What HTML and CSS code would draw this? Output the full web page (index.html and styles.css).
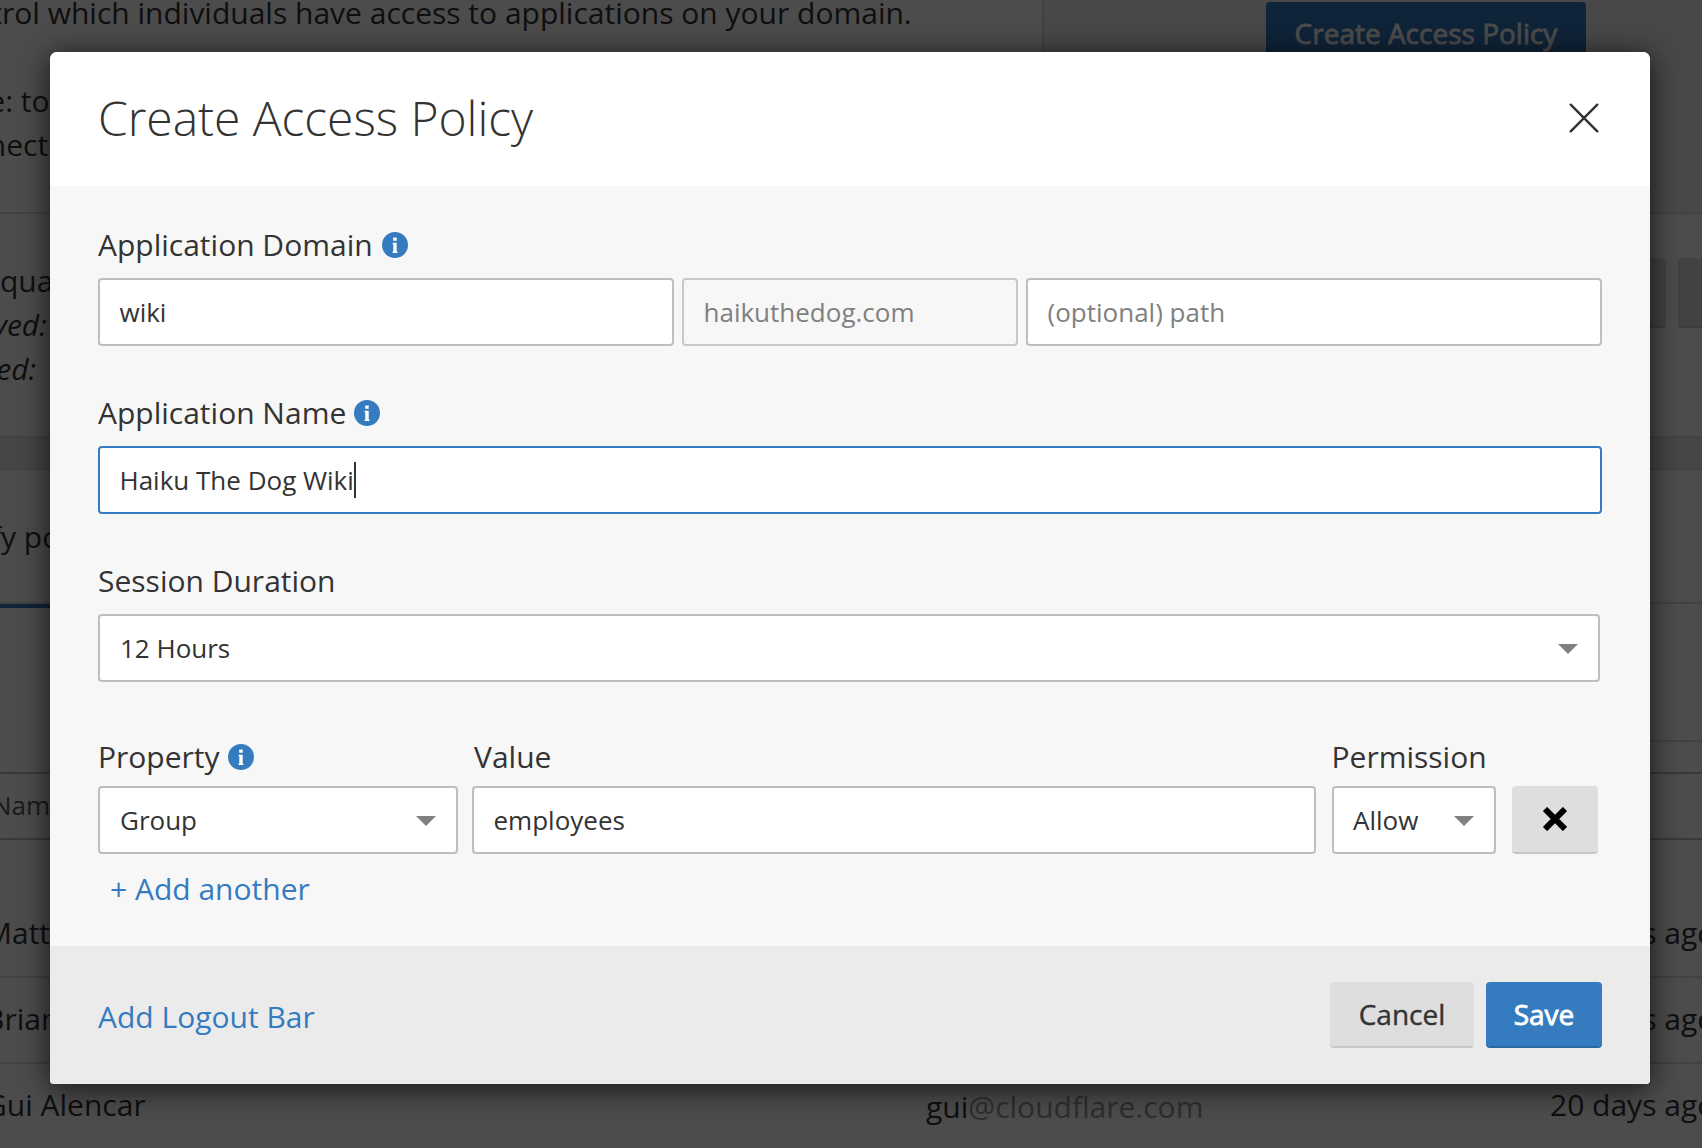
FILE: index.html
```html
<!DOCTYPE html>
<html lang="en">
<head>
<meta charset="utf-8">
<title>Create Access Policy</title>
<link rel="stylesheet" href="styles.css">
</head>
<body>
<div class="page">
  <section class="intro">
    <div class="intro-text">
      <p class="clip clip-intro">Control which individuals have access to applications on your domain.</p>
      <p class="clip clip-note">Note: to</p>
      <p class="clip clip-connect">connecti</p>
    </div>
    <div class="intro-action"><span class="btn btn-primary btn-create">Create Access Policy</span></div>
  </section>
  <section class="status">
    <div class="status-text">
      <p class="clip clip-qual">qua</p>
      <p class="clip clip-saved"><em>Saved:</em></p>
      <p class="clip clip-used"><em>Used:</em></p>
    </div>
    <div class="status-actions"><span class="ghost"></span><span class="ghost"></span></div>
  </section>
  <div class="band"></div>
  <section class="tabs"><p class="clip clip-modify">Modify po</p></section>
  <div class="tab-marker"></div>
  <div class="filters"></div>
  <div class="thead"><span class="clip clip-name">Name</span></div>
  <div class="row row-first"><span class="clip clip-person">Matt</span><span class="age">20 days ago</span></div>
  <div class="row"><span class="clip clip-person">Brian</span><span class="age">20 days ago</span></div>
  <div class="row"><span class="clip clip-person">Gui Alencar</span><span class="email">gui<span class="host">@cloudflare.com</span></span><span class="age">20 days ago</span></div>
</div>
<div class="overlay">
  <div class="modal">
    <header class="modal-header">
      <h1>Create Access Policy</h1>
      <svg class="close" width="30" height="30" viewBox="0 0 30 30"><path d="M1.7 1.7 28.3 28.3M28.3 1.7 1.7 28.3"/></svg>
    </header>
    <div class="modal-body">
      <div class="field">
        <div class="label">Application Domain <svg class="info" viewBox="0 0 26 26"><circle cx="13" cy="13" r="13"/><path d="M11.2 5.4h3.5v3.3h-3.5zM10.6 10.8h4.1v8.8h.7v1.4h-4.8v-1.4h.7v-7.4h-.7z"/></svg></div>
        <div class="domain-row">
          <div class="control">wiki</div>
          <div class="control disabled">haikuthedog.com</div>
          <div class="control placeholder">(optional) path</div>
        </div>
      </div>
      <div class="field">
        <div class="label label-tight">Application Name <svg class="info" viewBox="0 0 26 26"><circle cx="13" cy="13" r="13"/><path d="M11.2 5.4h3.5v3.3h-3.5zM10.6 10.8h4.1v8.8h.7v1.4h-4.8v-1.4h.7v-7.4h-.7z"/></svg></div>
        <div class="control focused">Haiku The Dog Wiki<span class="caret"></span></div>
      </div>
      <div class="field field-session">
        <div class="label">Session Duration</div>
        <div class="control select">12 Hours<span class="arrow"></span></div>
      </div>
      <div class="rule">
        <div class="label label-tight">Property <svg class="info" viewBox="0 0 26 26"><circle cx="13" cy="13" r="13"/><path d="M11.2 5.4h3.5v3.3h-3.5zM10.6 10.8h4.1v8.8h.7v1.4h-4.8v-1.4h.7v-7.4h-.7z"/></svg></div>
        <div class="label label-value">Value</div>
        <div class="label label-permission">Permission</div>
        <div class="control select">Group<span class="arrow"></span></div>
        <div class="control">employees</div>
        <div class="control select permission">Allow<span class="arrow"></span></div>
        <div class="btn btn-remove"><svg width="24" height="24" viewBox="0 0 24 24"><path d="M2 2 22 22M22 2 2 22"/></svg></div>
      </div>
      <a class="link add-another">+ Add another</a>
    </div>
    <footer class="modal-footer">
      <a class="link">Add Logout Bar</a>
      <div class="actions">
        <span class="btn btn-cancel">Cancel</span>
        <span class="btn btn-primary btn-save">Save</span>
      </div>
    </footer>
  </div>
</div>
</body>
</html>
```
FILE: styles.css
```css
* { box-sizing: border-box; }

body {
  margin: 0;
  width: 1702px;
  height: 1148px;
  overflow: hidden;
  position: relative;
  background: #fff;
  color: #333;
  font: 30px/44px "Open Sans", "Noto Sans", sans-serif;
}

p { margin: 0; }

/* Page behind the dialog */
.page { width: 1702px; height: 1148px; overflow: hidden; }
.clip { display: block; white-space: nowrap; }

.intro { display: flex; height: 214px; border-bottom: 2px solid #dedede; }
.intro-text { width: 1042px; }
.intro-action {
  flex: 1;
  border-left: 2px solid #dedede;
  background: #f2f2f2;
  padding: 2px 0 0 222px;
}
.clip-intro { margin: -9px 0 44px -64px; }
.clip-note { margin-left: -63px; }
.clip-connect { margin-left: -63px; }

.status { display: flex; justify-content: space-between; height: 222px; }
.status-text { padding-top: 45px; }
.clip-saved { margin-left: -39px; }
.clip-used { margin-left: -37px; }
.status-actions { display: flex; gap: 12px; padding-top: 44px; margin-right: -60px; }
.ghost { width: 84px; height: 70px; border-radius: 4px; background: #ddd; border-bottom: 2px solid #c8c8c8; }

.band { height: 34px; background: #ebebeb; border-top: 2px solid #dedede; border-bottom: 2px solid #dedede; }
.tabs { height: 134px; padding-top: 45px; border-bottom: 2px solid #dedede; }
.clip-modify { margin-left: -80px; }
.tab-marker { width: 800px; height: 4px; background: #357bbf; }
.filters { width: 800px; height: 134px; margin: 0 0 30px auto; border-bottom: 2px solid #dedede; }
.thead {
  height: 68px;
  padding-top: 9px;
  border-top: 2px solid #bebebe;
  border-bottom: 2px solid #bebebe;
  font-size: 26px;
  color: #595959;
}
.clip-name { margin-left: -8px; }
.row {
  display: grid;
  grid-template-columns: 926px 624px auto;
  height: 86px;
  padding-top: 19px;
  border-bottom: 2px solid #dedede;
  white-space: nowrap;
}
.row-first { height: 138px; padding-top: 71px; }
.clip-person { margin-left: -15px; }
.email { padding-top: 2px; }
.age { grid-column: 3; }
.host { color: #999; }

/* Dialog */
.overlay { position: absolute; inset: 0; padding: 52px 52px 0 50px; background: rgba(0, 0, 0, .7); }
.modal {
  display: flex;
  flex-direction: column;
  height: 1032px;
  border-radius: 7px 7px 4px 4px;
  overflow: hidden;
  background: #f7f7f7;
  box-shadow: 0 4px 30px rgba(0, 0, 0, .75);
}
.modal-header {
  display: flex;
  justify-content: space-between;
  align-items: flex-start;
  height: 134px;
  padding: 33px 51px 0 48px;
  background: #fff;
}
h1 { margin: 0; font-size: 48px; line-height: 66px; font-weight: 300; letter-spacing: -.05px; }
.close { margin-top: 17.5px; fill: none; stroke: #333; stroke-width: 2.4; stroke-linecap: round; }

.modal-body { height: 760px; padding: 37px 48px 0; }
.field { height: 168px; }
.field-session { height: 176px; padding-right: 2px; }
.label { display: flex; align-items: center; gap: 9px; height: 44px; margin-bottom: 11px; }
.label-tight { gap: 8px; }
.info { width: 26px; height: 26px; fill: #357bbf; }
.info path { fill: #fff; }

.control {
  display: flex;
  align-items: center;
  height: 68px;
  padding: 0 19.5px;
  border: 2px solid #bebebe;
  border-radius: 4px;
  background: #fff;
  font-size: 26px;
}
.domain-row { display: grid; grid-template-columns: 576px 336px 576px; gap: 8px; }
.control.disabled { background: #f7f7f7; border-color: #c8c8c8; color: #808080; }
.control.placeholder { color: #808080; }
.control.focused { border-color: #357bbf; }
.caret { width: 2px; height: 36px; background: #333; }
.control.select { justify-content: space-between; padding: 0 20px; }
.arrow { margin-top: 2px; border: 10px solid transparent; border-top-color: #808080; border-bottom: 0; }

.rule { display: grid; grid-template-columns: 360px 844px 164px 86px; column-gap: 14px; }
.rule .label { margin-bottom: 7px; }
.label-value { margin-left: 2px; }
.label-permission { grid-column: 3 / 5; margin-left: 1.5px; }
.permission { margin: 0 -2px 0 2px; }
.control.permission { padding-left: 19px; }

.link { color: #357bbf; }
.add-another { display: block; margin: 13px 0 0 12px; }

.modal-footer {
  display: flex;
  justify-content: space-between;
  align-items: flex-start;
  height: 138px;
  padding: 36px 48px 0;
  background: #ebebeb;
}
.modal-footer .link { margin-top: 13px; }
.actions { display: flex; gap: 12px; }
.btn {
  display: flex;
  align-items: center;
  justify-content: center;
  height: 66px;
  border-radius: 4px;
  background: #dedede;
  border-bottom: 2px solid #c8c8c8;
  font-size: 28px;
  -webkit-text-stroke: .4px currentColor;
}
.btn-primary { background: #357bbf; border-color: #2869a2; color: #fff; -webkit-text-stroke-width: .8px; }
.btn-create { width: 320px; padding-bottom: 2px; }
.btn-cancel { width: 144px; }
.btn-save { width: 116px; }
.btn-remove { width: 86px; height: 68px; margin-left: 4px; }
.btn-remove svg { fill: none; stroke: #000; stroke-width: 6; }
```
